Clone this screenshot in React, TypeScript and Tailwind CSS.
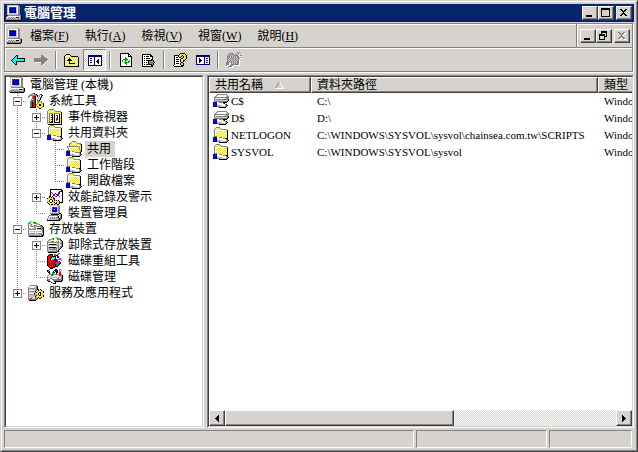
import React from "react";

const SANS = "font-['Liberation_Serif','Noto_Sans_CJK_TC',sans-serif]";

const PALETTE: Record<string, string> = {
  k: "#000000",
  w: "#ffffff",
  g: "#848284",
  l: "#c6c3c6",
  d: "#424142",
  b: "#0000ff",
  n: "#000084",
  y: "#ffff9c",
  Y: "#f7e329",
  o: "#848200",
  c: "#00ffff",
  t: "#008284",
  r: "#ff0000",
  e: "#00a200",
  m: "#ff00ff",
};

const BITMAPS: Record<string, string[]> = {
  computer: [
    ".lllllllllllg...",
    ".lwwwwwwwwwwgg..",
    ".lwdddddddlwgg..",
    ".lwdnnnnnnlwgg..",
    ".lwdnbbbbnlwgg..",
    ".lwdnbbbbnlwgg..",
    ".lwdnbbbbnlwgg..",
    ".lwdnnnnnnlwgg..",
    ".lwllllllllwgg..",
    ".lllllllllllgg..",
    "..ggggggggggggg.",
    ".lwwwwwwwwwwwlgk",
    "lwlglglgllkkklgk",
    "llglglglglllllgk",
    "gggggggggggggggk",
    ".kkkkkkkkkkkkkk.",
  ],
  tools: [
    "....ggk.........",
    "..ggllggk...gk..",
    ".ggggggggk.gwgk.",
    "gg..grrk.k.gwk..",
    "g...grrk..gwgk..",
    "....grrk..gwk...",
    "...gccrk.gwgk...",
    "...gttrk.ggk....",
    "..geettk.gogYo..",
    "..gekrrk.YoYYoY.",
    "..gekrrk.oYYYYYk",
    "..gekrrkoYYkkYYk",
    "..gekrrkYYYkkYYk",
    "..gekrrk.oYYYYYk",
    "..kkkkkk.YoYYoY.",
    "...........kk...",
  ],
  events: [
    "..ggggg.........",
    ".gyYyYyg........",
    "gyYyYyYygggggg..",
    "gYyYyYyYyYyYyYk.",
    "gyggggYggggggyk.",
    "gYgwwkykwwwwkYk.",
    "gygwrkYkwrrwkyk.",
    "gYgwwkykwwbwkYk.",
    "gygwbkYkwwbwkyk.",
    "gYgwwkykwrbwkYk.",
    "gygwrkYkwrbwkyk.",
    "gYgwwkykwrwwkYk.",
    "gygwbkYkwwwwkyk.",
    "gYgkkkykkkkkkYk.",
    "gyYyYyYyYyYyYyk.",
    ".kkkkkkkkkkkkkk.",
  ],
  share: [
    "...gggg.........",
    "..gyYyYg........",
    ".gyYyYyYgggggg..",
    ".gwwwwwwwwwwwYk.",
    ".gwYyYyYyYyYyYk.",
    ".gwyYyYyYyYyYyk.",
    ".gwYyYyYyYyYyYk.",
    ".gwyYyYyYyYyYyk.",
    ".gwYyYyYyYyYyYk.",
    ".tggYyYyYyYyYyk.",
    "bbbnwwgggYyYyYk.",
    "bbbnwwwwwwgggkk.",
    "bbbnlwwwwwwwwgk.",
    "bbbnllgllwwwwlgk",
    "nnnngggllllllgk.",
    "......kkkkkkkk..",
  ],
  openShare: [
    "......gggg......",
    ".....gyYyYg.....",
    "...ggYyYyYygggg.",
    "...gyYyYyYyYyYgk",
    "...gYyYyYyYyYyYk",
    ".gggggggggggygyk",
    ".gwyyyyyyyyygYyk",
    "..gwYyYyYyYyYgYk",
    "..gwyYyYyYyYygyk",
    ".tggYyYyYyYyYygk",
    "bbbnwwggyYyYyYgk",
    "bbbnwwwwwgggggk.",
    "bbbnlwwwwwwwwgk.",
    "bbbnllgllwwwwlgk",
    "nnnngggllllllgk.",
    "......kkkkkkkk..",
  ],
  perf: [
    "...kkkkkkkkkkkk.",
    "...kwwwwwwwwwwbk",
    "...kwwwwwwwwrbbk",
    "...krwwwwwwrbwwk",
    "...kwrwwbwwrbwwk",
    "...kwwrbwbrbwwwk",
    "...kwwbrwwbrwwwk",
    "..kkwbwwrrwwrwwk",
    ".YkYkYbwwwwwwwwk",
    "kYYYYYkbwwwwwwwk",
    "YYYkkYYkwwwwwwwk",
    "YYkwwkYkYkYkwwwk",
    "YYkwwkYYYYYYkwwk",
    "kYYkkYYkwkYYkkkk",
    ".kYYYYYYkkYYk...",
    "..kYkkYkYYkk....",
  ],
  device: [
    "...lllllllgg....",
    "...lwwwwwwwgg...",
    "...lwdddddlgg...",
    "...lwdbbbblgg...",
    "...lwdbwbblgg...",
    "...lwdbbbblgg...",
    "...lwdbbbblgg...",
    "...lwlllllwgg...",
    "...gggggggggkk..",
    "....kkkkkkkkwgk.",
    "..ggggggggg.glk.",
    ".gwwwwwwwwlk.gk.",
    ".gwglglglggk.gk.",
    "gwlglglglglgkgk.",
    "gllllllllllgkk..",
    "kkkkkkkkkkkkk...",
  ],
  storage: [
    "..eyyc..........",
    ".ccyyeee........",
    "gecywweggg......",
    "gyyewwyyllgg....",
    "glccyyeglwwlgk..",
    "gwlgggglggggggk.",
    "gwwwwwlgwwwwlggk",
    "glllllggwkkkkggk",
    "ggggggggwllllggk",
    "gwwwwwwwwwwwwwgk",
    "glllllllllllllgk",
    "gwwwwwwwlwwwwwgk",
    "glggggglllggggwk",
    "gllllllllllllegk",
    "ggggggggggggggkk",
    ".kkkkkkkkkkkkkk.",
  ],
  removable: [
    ".......yycc.....",
    ".....eeyycggg...",
    "..ggcceywweggk..",
    ".gllyyywwyylwgk.",
    "glwlleeyyccgwlgk",
    "ggggggggggggllgk",
    "gwwwwwwwwwlglggk",
    "glkkkkkkkglgwwgk",
    "gllllllllglglwgk",
    "gwwwwwwwwwlgwggk",
    "glkkkkkkkglglgk.",
    "glglllgelglggk..",
    "glgggggggglgk...",
    "gllllllllglk....",
    "ggggggggggkk....",
    ".kkkkkkkkk......",
  ],
  defrag: [
    "...........mm...",
    "..kkkk.ee.mm....",
    ".krrrk.eekk.....",
    "krrrrkkkk.bb....",
    "krrrkccck.bb....",
    "krrkcccck...mm..",
    "krrkccckkb.mmm..",
    "krrrrrkrkbb...m.",
    "krrrrrkrkkmmk...",
    "krrrrrrrkmmmmk..",
    "krkrrrrkmmeekk..",
    "krkrrrkrkeeek...",
    "krkrrrrrkeek....",
    ".krrrrrkkkk.....",
    "..krrkkk........",
    "...kkk..........",
  ],
  disk: [
    "..g.....kk..gg..",
    "kk.....kbbk.g.g.",
    "kgk...k.bbk.gg..",
    ".kk..eek.kk.rr..",
    "..k..ee..k..rr..",
    "..gggeegggggrrg.",
    ".gwweewwwwwwrrgk",
    "gwwllwwwllwwwlgk",
    "glllllllllllllgk",
    "gwwggwwwwwggwwgk",
    "gggwyggggggeeggk",
    "kggwwwggggggggkk",
    ".kkgwwwkkkkkkkk.",
    "....kgwwk.......",
    "......kkk.......",
    "................",
  ],
  services: [
    "..ggggggg.......",
    ".gwwwwwlgk......",
    "gwwwwwllgk......",
    "glggggglgk......",
    "gllllllggkk.k...",
    "glwwwwlggYkYYkY.",
    "glgggglkYYYYYYYk",
    "gllllllgkYYkkYYk",
    "glwwwwkYYYk.kYYY",
    "glggglkYYYk.kYYY",
    "gllllllgkYYkkYYk",
    "gllllllkYYYYYYYk",
    "gllllllggYkYYkY.",
    "glrrlllggk.kk...",
    "ggggggggk.......",
    ".kkkkkkk........",
  ],
  drive: [
    "................",
    "....gggggggggg..",
    "...glwwwwwwwwlg.",
    "..glwwwwwwwwwlgg",
    ".ggggggggggggggg",
    ".glwwwwwwwwwlggg",
    ".glggggggggeelgk",
    ".gllllllllllllgk",
    ".gggggggggggggk.",
    "bbbnwwggggkkkk..",
    "bbbnwwwwwwgk....",
    "bbbnlwwwwwwwgk..",
    "bbbnllgllwwwlgk.",
    "nnnnggglllllgk..",
    "......kkkkkkk...",
    "................",
  ],
  back: [
    ".....kk.......",
    "....kck.......",
    "...kcck.......",
    "..kccckkkkkkkk",
    ".kccccccccccck",
    "kcccccccccccck",
    ".kccckkkkkkkkk",
    "..kcck........",
    "...kck........",
    "....kk........",
  ],
  forward: [
    ".......gg.....",
    ".......ggg....",
    ".......gggg...",
    "ggggggggggggg.",
    "gggggggggggggg",
    "gggggggggggggw",
    "ggggggggggggw.",
    ".wwwwwwggggw..",
    ".......gggw...",
    ".......ggw....",
    "........w.....",
  ],
  up: [
    "..kkkk..........",
    ".kyyyyk.........",
    "kyyyyyykkkkkkk..",
    "kyYyYyYyYyYyYyk.",
    "kYyYykYyYyYyYyk.",
    "kyYykkkYyYyYyYk.",
    "kYykkkkkyYyYyYk.",
    "kyYyYkYyYyYyYyk.",
    "kYyYykyYyYyYyYk.",
    "kyYyYkkkkkkyYyk.",
    "kYyYyYyYyYyYyYk.",
    "kyYyYyYyYyYyYyk.",
    "kkkkkkkkkkkkkkk.",
  ],
  hideTree: [
    "nnnnnnnnnnnnnn",
    "nnnnnnnnnnnnnn",
    "nwwwwwnwwwwwwn",
    "nwnnwwnwwwwwwn",
    "nwwwwwnwwwkwwn",
    "nwnnwwnwwkkwwn",
    "nwwwwwnwkkkwwn",
    "nwnnwwnwwkkwwn",
    "nwwwwwnwwwkwwn",
    "nwwwwwnwwwwwwn",
    "nnnnnnnnnnnnnn",
  ],
  showPane: [
    "nnnnnnnnnnnnnn",
    "nnnnnnnnnnnnnn",
    "nwwwwwwwnwwwwn",
    "nwwkwwwwnwnnwn",
    "nwwkkwwwnwwwwn",
    "nwwkkkwwnwnnwn",
    "nwwkkwwwnwwwwn",
    "nwwkwwwwnwnnwn",
    "nwwwwwwwnwwwwn",
    "nnnnnnnnnnnnnn",
  ],
  refresh: [
    "kkkkkkkkk...",
    "kwwwwwwwkk..",
    "kwwwwwwwkwk.",
    "kwwwwwwwkkkk",
    "kwwwwewwwwwk",
    "kwwwweewwwwk",
    "kwweeeeewwwk",
    "kwewweewwewk",
    "kwewwewweewk",
    "kwwweeeeewwk",
    "kwwwweewwwwk",
    "kwwwwwewwwwk",
    "kwwwwwwwwwwk",
    "kkkkkkkkkkkk",
  ],
  exportList: [
    "kkkkkkkkk.....",
    "kwwwwwwwkk....",
    "kwkwkkkwkkk...",
    "kwwwwwwwwwk...",
    "kwkwkkkkwwk...",
    "kwwwwwwwwkk...",
    "kwkwkkkkkkgk..",
    "kwwwwwkggggk..",
    "kwkwkwkgggggk.",
    "kwwwwwkggggk..",
    "kwkwkkkkkkgk..",
    "kwwwwwwwwkk...",
    "kkkkkkkkkkk...",
  ],
  help: [
    ".......kkkkk..",
    "......kYYYYYk.",
    ".kkkkkYYYkYYYk",
    ".kwwwkYYk.kYYk",
    ".kwkkwkk..kYYk",
    ".kwwwwwwkkYYYk",
    ".kwkkkwkYYYYk.",
    ".kwwwwwkYYkk..",
    ".kwkkkwkYYk...",
    ".kwwwwwwkk....",
    ".kwkkkwkYYk...",
    ".kwwwwwkYYk...",
    "kwwwwwwwkkk...",
    ".kkkkkkkkk....",
  ],
  disabled: [
    "...........g.g..",
    "...gggg..g..g.gw",
    "..glglgg..g.gww.",
    ".glglglggggg..gg",
    ".ggglglglglggww.",
    ".glglglglglgg.g.",
    ".gglglglglglggww",
    ".glglglglglggw..",
    ".gglglglglglgw..",
    ".glglglglglggw..",
    "gggglglglglggw..",
    "gggwwglglglggw..",
    "gggwwggggggggw..",
    "gwwwgggwwwwwww..",
    "wwggggw.........",
    "...wwww.........",
  ],
};

function Icon({ name }: { name: string }) {
  const rows = BITMAPS[name];
  const width = rows[0].length;
  const paths: Record<string, string> = {};
  rows.forEach((row, y) => {
    for (let x = 0; x < row.length; x++) {
      const key = row[x];
      if (key !== ".") paths[key] = (paths[key] ?? "") + `M${x} ${y}h1v1h-1z`;
    }
  });
  return (
    <svg
      aria-hidden="true"
      className="shrink-0"
      width={width}
      height={rows.length}
      viewBox={`0 0 ${width} ${rows.length}`}
      shapeRendering="crispEdges"
    >
      {Object.entries(paths).map(([key, d]) => (
        <path key={key} d={d} fill={PALETTE[key]} />
      ))}
    </svg>
  );
}

const RAISED =
  "border border-t-white border-l-white border-r-[#424142] border-b-[#424142] bg-[#d6d3ce] shadow-[inset_-1px_-1px_#848284]";

function CaptionButton({ label, kind, disabled }: { label: string; kind: "min" | "max" | "restore" | "close"; disabled?: boolean }) {
  return (
    <button type="button" aria-label={label} disabled={disabled} className={`flex h-[14px] w-4 shrink-0 items-center justify-center ${RAISED}`}>
      <svg width="12" height="10" viewBox="0 0 12 10" shapeRendering="crispEdges" fill="none" stroke={disabled ? "#848284" : "#000"}>
        {kind === "min" && <path d="M2 8h6" strokeWidth="2" />}
        {kind === "max" && <path d="M1.5 0v8.5h8V0" />}
        {kind === "max" && <path d="M1 1h9" strokeWidth="2" />}
        {kind === "restore" && <path d="M3.5 3V.5h5v5H7M3 1.5h6M1.5 3.5h5v5h-5zM1 4.5h6" />}
        {kind === "close" && disabled && <path d="M3 2h2v1h1v1h1V3h1V2h2v1H9v1H8v1H7v1h1v1h1v1h1v1H8V8H7V7H6v1H5v1H3V8h1V7h1V6h1V5H5V4H4V3H3z" fill="#fff" stroke="none" />}
        {kind === "close" && <path d="M2 1h2v1h1v1h1V2h1V1h2v1H8v1H7v1H6v1h1v1h1v1h1v1H7V7H6V6H5v1H4v1H2V7h1V6h1V5h1V4H4V3H3V2H2z" fill={disabled ? "#848284" : "#000"} stroke="none" />}
      </svg>
    </button>
  );
}

const MENUS: [string, string][] = [
  ["檔案", "F"],
  ["執行", "A"],
  ["檢視", "V"],
  ["視窗", "W"],
  ["說明", "H"],
];

function ToolButton({ icon, label, pressed, disabled }: { icon: string; label: string; pressed?: boolean; disabled?: boolean }) {
  return (
    <button
      type="button"
      aria-label={label}
      aria-pressed={pressed}
      disabled={disabled}
      className={`flex h-[22px] w-[23px] items-center justify-center ${
        pressed
          ? "border border-t-[#848284] border-l-[#848284] border-r-white border-b-white bg-[repeating-conic-gradient(#fff_0_25%,#d6d3ce_0_50%)] bg-size-[2px_2px]"
          : ""
      }`}
    >
      <Icon name={icon} />
    </button>
  );
}

function Separator() {
  return (
    <div className="flex w-2 justify-center py-0.5">
      <div className="h-[18px] w-0.5 border-l border-r border-l-[#848284] border-r-white" />
    </div>
  );
}

/* Guide codes: v = line through, t = branch, e = last branch, blank = empty column. */
type Node = { guides: string; icon: string; label: string; state?: "+" | "-"; selected?: boolean };

const TREE: Node[] = [
  { guides: "", icon: "computer", label: "電腦管理 (本機)" },
  { guides: "t", icon: "tools", label: "系統工具", state: "-" },
  { guides: "vt", icon: "events", label: "事件檢視器", state: "+" },
  { guides: "vt", icon: "share", label: "共用資料夾", state: "-" },
  { guides: "vvt", icon: "openShare", label: "共用", selected: true },
  { guides: "vvt", icon: "share", label: "工作階段" },
  { guides: "vve", icon: "share", label: "開啟檔案" },
  { guides: "vt", icon: "perf", label: "效能記錄及警示", state: "+" },
  { guides: "ve", icon: "device", label: "裝置管理員" },
  { guides: "t", icon: "storage", label: "存放裝置", state: "-" },
  { guides: "vt", icon: "removable", label: "卸除式存放裝置", state: "+" },
  { guides: "vt", icon: "defrag", label: "磁碟重組工具" },
  { guides: "ve", icon: "disk", label: "磁碟管理" },
  { guides: "e", icon: "services", label: "服務及應用程式", state: "+" },
];

function Guide({ code, state }: { code: string; state?: "+" | "-" }) {
  return (
    <svg aria-hidden="true" width="19" height="16" viewBox="0 0 19 16" shapeRendering="crispEdges" fill="none">
      <g stroke="#848284" strokeDasharray="1 1">
        {(code === "v" || code === "t") && <path d="M9.5 0v16" />}
        {code === "e" && <path d="M9.5 0v8" />}
        {(code === "t" || code === "e") && <path d="M9 8.5h10" />}
      </g>
      {state && (
        <>
          <rect x="5.5" y="4.5" width="8" height="8" fill="#fff" stroke="#848284" />
          <path d={state === "+" ? "M7 8.5h5M9.5 6v5" : "M7 8.5h5"} stroke="#000" />
        </>
      )}
    </svg>
  );
}

function TreeRow({ node }: { node: Node }) {
  const codes = node.guides.split("");
  return (
    <li role="treeitem" aria-level={codes.length + 1} aria-selected={!!node.selected} className="flex h-4 items-center whitespace-nowrap">
      {codes.map((code, i) =>
        node.state && i === codes.length - 1 ? (
          <button key={i} type="button" aria-label={`${node.state === "+" ? "展開" : "摺疊"} ${node.label}`} className="shrink-0">
            <Guide code={code} state={node.state} />
          </button>
        ) : (
          <Guide key={i} code={code} />
        ),
      )}
      <span className="ml-px flex items-center gap-[3px]">
        <Icon name={node.icon} />
        <span className={`h-4 pr-1 pl-0.5 leading-4 ${node.selected ? "bg-[#d6d3ce]" : ""}`}>{node.label}</span>
      </span>
    </li>
  );
}

const SHARES = [
  { icon: "drive", name: "C$", path: "C:\\", type: "Windows" },
  { icon: "drive", name: "D$", path: "D:\\", type: "Windows" },
  { icon: "share", name: "NETLOGON", path: "C:\\WINDOWS\\SYSVOL\\sysvol\\chainsea.com.tw\\SCRIPTS", type: "Windows" },
  { icon: "share", name: "SYSVOL", path: "C:\\WINDOWS\\SYSVOL\\sysvol", type: "Windows" },
];

const HEAD =
  "h-4 border-t border-l border-r border-b border-t-white border-l-white border-r-[#424142] border-b-[#424142] bg-[#d6d3ce] pl-[5px] text-left font-normal leading-[14px] shadow-[inset_-1px_-1px_#848284]";

const SUNKEN =
  "border border-t-[#848284] border-l-[#848284] border-r-white border-b-white";
const SUNKEN_INNER =
  "border border-t-[#424142] border-l-[#424142] border-r-[#d6d3ce] border-b-[#d6d3ce] bg-white";

export default function App() {
  return (
    <div className={`flex h-screen flex-col border border-t-[#d6d3ce] border-l-[#d6d3ce] border-r-[#424142] border-b-[#424142] text-xs text-black ${SANS}`}>
      <div className="flex min-h-0 flex-1 flex-col border border-t-white border-l-white border-r-[#848284] border-b-[#848284] bg-[#d6d3ce] p-0.5">
        <header className="flex h-[18px] shrink-0 items-center bg-[#08246b] pr-0.5 pl-0.5 text-white">
          <Icon name="computer" />
          <h1 className="ml-0.5 flex-1 text-[13px] leading-[18px] font-bold">電腦管理</h1>
          <CaptionButton label="最小化" kind="min" />
          <CaptionButton label="最大化" kind="max" />
          <div className="w-0.5" />
          <CaptionButton label="關閉" kind="close" />
        </header>

        <div className="mt-px mr-px mb-px shrink-0 border border-[#848284] shadow-[1px_1px_#fff,inset_1px_1px_#fff]">
          <div className="flex h-6 border-b border-[#848284]">
            <nav className="flex flex-1 items-center pl-px">
              <Icon name="computer" />
              {MENUS.map(([label, key]) => (
                <button key={key} type="button" className="px-2 leading-4">
                  {label}(<u>{key}</u>)
                </button>
              ))}
            </nav>
            <div className="flex items-center border-l border-[#848284] pr-0.5 pl-[3px] shadow-[inset_1px_1px_#fff]">
              <CaptionButton label="最小化視窗" kind="min" />
              <CaptionButton label="還原視窗" kind="restore" />
              <div className="w-0.5" />
              <CaptionButton label="關閉視窗" kind="close" disabled />
            </div>
          </div>
          <div role="toolbar" className="flex h-[23px] items-end pl-px shadow-[inset_1px_1px_#fff]">
            <ToolButton icon="back" label="上一頁" />
            <ToolButton icon="forward" label="下一頁" disabled />
            <Separator />
            <ToolButton icon="up" label="上移一層" />
            <ToolButton icon="hideTree" label="顯示或隱藏主控台樹狀目錄" pressed />
            <Separator />
            <ToolButton icon="refresh" label="重新整理" />
            <ToolButton icon="exportList" label="匯出清單" />
            <Separator />
            <ToolButton icon="help" label="說明" />
            <ToolButton icon="showPane" label="顯示窗格" />
            <Separator />
            <ToolButton icon="disabled" label="新增共用" disabled />
          </div>
        </div>

        <main className="mt-0.5 flex min-h-0 flex-1 gap-[3px]">
          <section className={`flex w-[200px] shrink-0 ${SUNKEN}`}>
            <div className={`flex-1 overflow-hidden pl-0.5 ${SUNKEN_INNER}`}>
              <ul role="tree">
                {TREE.map((node) => (
                  <TreeRow key={node.label} node={node} />
                ))}
              </ul>
            </div>
          </section>

          <section className={`flex min-w-0 flex-1 ${SUNKEN}`}>
            <div className={`flex min-w-0 flex-1 flex-col ${SUNKEN_INNER}`}>
              <div className="min-h-0 flex-1 overflow-hidden">
                <table className="w-[650px] min-w-full table-fixed border-separate border-spacing-0">
                  <colgroup>
                    <col className="w-[102px]" />
                    <col className="w-[287px]" />
                    <col />
                  </colgroup>
                  <thead>
                    <tr>
                      <th className={HEAD}>
                        <span className="flex items-center gap-3">
                          共用名稱
                          <svg aria-hidden="true" width="9" height="8" viewBox="0 0 9 8" fill="none">
                            <path d="M4.5 0.5L0.5 7.5" stroke="#848284" />
                            <path d="M4.5 0.5L8.5 7.5H0.5" stroke="#fff" />
                          </svg>
                        </span>
                      </th>
                      <th className={HEAD}>資料夾路徑</th>
                      <th className={HEAD}>類型</th>
                    </tr>
                  </thead>
                  <tbody className="text-[11px] leading-4">
                    {SHARES.map((share) => (
                      <tr key={share.name} className="h-[17px] whitespace-nowrap">
                        <td className="p-0 pl-1 align-top">
                          <span className="flex h-4 items-center gap-0.5">
                            <Icon name={share.icon} />
                            {share.name}
                          </span>
                        </td>
                        <td className="p-0 pl-1.5 align-top">{share.path}</td>
                        <td className="p-0 pl-1.5 align-top">{share.type}</td>
                      </tr>
                    ))}
                  </tbody>
                </table>
              </div>
              <div className="flex h-4 shrink-0 bg-[repeating-conic-gradient(#fff_0_25%,#d6d3ce_0_50%)] bg-size-[2px_2px]">
                <button type="button" aria-label="向左捲動" className={`flex w-4 items-center justify-center ${RAISED}`}>
                  <svg width="4" height="7" viewBox="0 0 4 7" shapeRendering="crispEdges">
                    <path d="M3 0h1v7H3V6H2V5H1V4H0V3h1V2h1V1h1z" />
                  </svg>
                </button>
                <div className={`w-[229px] ${RAISED}`} />
                <div className="flex-1" />
                <button type="button" aria-label="向右捲動" className={`flex w-4 items-center justify-center ${RAISED}`}>
                  <svg width="4" height="7" viewBox="0 0 4 7" shapeRendering="crispEdges">
                    <path d="M0 0h1v1h1v1h1v1h1v1H3v1H2v1H1v1H0z" />
                  </svg>
                </button>
              </div>
            </div>
          </section>
        </main>

        <footer className="mt-0.5 mr-0.5 flex h-[18px] shrink-0 gap-0.5">
          <div className={`flex-1 ${SUNKEN}`} />
          <div className={`w-[131px] ${SUNKEN}`} />
          <div className={`w-[83px] ${SUNKEN}`} />
        </footer>
      </div>
    </div>
  );
}
